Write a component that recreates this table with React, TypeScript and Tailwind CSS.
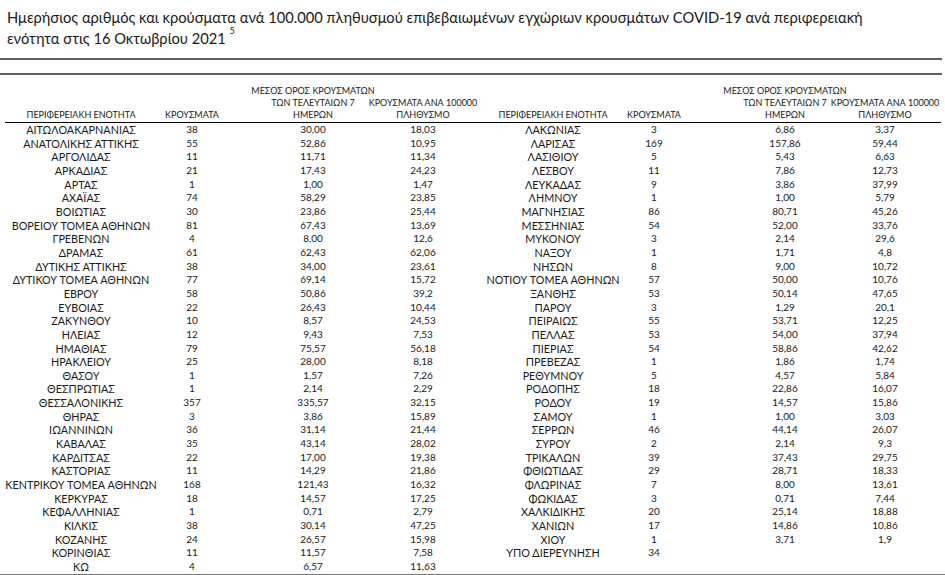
import React from "react";

type Row = [string, string, string, string];

const left: Row[] = [
  ["ΑΙΤΩΛΟΑΚΑΡΝΑΝΙΑΣ", "38", "30,00", "18,03"],
  ["ΑΝΑΤΟΛΙΚΗΣ ΑΤΤΙΚΗΣ", "55", "52,86", "10,95"],
  ["ΑΡΓΟΛΙΔΑΣ", "11", "11,71", "11,34"],
  ["ΑΡΚΑΔΙΑΣ", "21", "17,43", "24,23"],
  ["ΑΡΤΑΣ", "1", "1,00", "1,47"],
  ["ΑΧΑΪΑΣ", "74", "58,29", "23,85"],
  ["ΒΟΙΩΤΙΑΣ", "30", "23,86", "25,44"],
  ["ΒΟΡΕΙΟΥ ΤΟΜΕΑ ΑΘΗΝΩΝ", "81", "67,43", "13,69"],
  ["ΓΡΕΒΕΝΩΝ", "4", "8,00", "12,6"],
  ["ΔΡΑΜΑΣ", "61", "62,43", "62,06"],
  ["ΔΥΤΙΚΗΣ ΑΤΤΙΚΗΣ", "38", "34,00", "23,61"],
  ["ΔΥΤΙΚΟΥ ΤΟΜΕΑ ΑΘΗΝΩΝ", "77", "69,14", "15,72"],
  ["ΕΒΡΟΥ", "58", "50,86", "39,2"],
  ["ΕΥΒΟΙΑΣ", "22", "26,43", "10,44"],
  ["ΖΑΚΥΝΘΟΥ", "10", "8,57", "24,53"],
  ["ΗΛΕΙΑΣ", "12", "9,43", "7,53"],
  ["ΗΜΑΘΙΑΣ", "79", "75,57", "56,18"],
  ["ΗΡΑΚΛΕΙΟΥ", "25", "28,00", "8,18"],
  ["ΘΑΣΟΥ", "1", "1,57", "7,26"],
  ["ΘΕΣΠΡΩΤΙΑΣ", "1", "2,14", "2,29"],
  ["ΘΕΣΣΑΛΟΝΙΚΗΣ", "357", "335,57", "32,15"],
  ["ΘΗΡΑΣ", "3", "3,86", "15,89"],
  ["ΙΩΑΝΝΙΝΩΝ", "36", "31,14", "21,44"],
  ["ΚΑΒΑΛΑΣ", "35", "43,14", "28,02"],
  ["ΚΑΡΔΙΤΣΑΣ", "22", "17,00", "19,38"],
  ["ΚΑΣΤΟΡΙΑΣ", "11", "14,29", "21,86"],
  ["ΚΕΝΤΡΙΚΟΥ ΤΟΜΕΑ ΑΘΗΝΩΝ", "168", "121,43", "16,32"],
  ["ΚΕΡΚΥΡΑΣ", "18", "14,57", "17,25"],
  ["ΚΕΦΑΛΛΗΝΙΑΣ", "1", "0,71", "2,79"],
  ["ΚΙΛΚΙΣ", "38", "30,14", "47,25"],
  ["ΚΟΖΑΝΗΣ", "24", "26,57", "15,98"],
  ["ΚΟΡΙΝΘΙΑΣ", "11", "11,57", "7,58"],
  ["ΚΩ", "4", "6,57", "11,63"],
];

const right: Row[] = [
  ["ΛΑΚΩΝΙΑΣ", "3", "6,86", "3,37"],
  ["ΛΑΡΙΣΑΣ", "169", "157,86", "59,44"],
  ["ΛΑΣΙΘΙΟΥ", "5", "5,43", "6,63"],
  ["ΛΕΣΒΟΥ", "11", "7,86", "12,73"],
  ["ΛΕΥΚΑΔΑΣ", "9", "3,86", "37,99"],
  ["ΛΗΜΝΟΥ", "1", "1,00", "5,79"],
  ["ΜΑΓΝΗΣΙΑΣ", "86", "80,71", "45,26"],
  ["ΜΕΣΣΗΝΙΑΣ", "54", "52,00", "33,76"],
  ["ΜΥΚΟΝΟΥ", "3", "2,14", "29,6"],
  ["ΝΑΞΟΥ", "1", "1,71", "4,8"],
  ["ΝΗΣΩΝ", "8", "9,00", "10,72"],
  ["ΝΟΤΙΟΥ ΤΟΜΕΑ ΑΘΗΝΩΝ", "57", "50,00", "10,76"],
  ["ΞΑΝΘΗΣ", "53", "50,14", "47,65"],
  ["ΠΑΡΟΥ", "3", "1,29", "20,1"],
  ["ΠΕΙΡΑΙΩΣ", "55", "53,71", "12,25"],
  ["ΠΕΛΛΑΣ", "53", "54,00", "37,94"],
  ["ΠΙΕΡΙΑΣ", "54", "58,86", "42,62"],
  ["ΠΡΕΒΕΖΑΣ", "1", "1,86", "1,74"],
  ["ΡΕΘΥΜΝΟΥ", "5", "4,57", "5,84"],
  ["ΡΟΔΟΠΗΣ", "18", "22,86", "16,07"],
  ["ΡΟΔΟΥ", "19", "14,57", "15,86"],
  ["ΣΑΜΟΥ", "1", "1,00", "3,03"],
  ["ΣΕΡΡΩΝ", "46", "44,14", "26,07"],
  ["ΣΥΡΟΥ", "2", "2,14", "9,3"],
  ["ΤΡΙΚΑΛΩΝ", "39", "37,43", "29,75"],
  ["ΦΘΙΩΤΙΔΑΣ", "29", "28,71", "18,33"],
  ["ΦΛΩΡΙΝΑΣ", "7", "8,00", "13,61"],
  ["ΦΩΚΙΔΑΣ", "3", "0,71", "7,44"],
  ["ΧΑΛΚΙΔΙΚΗΣ", "20", "25,14", "18,88"],
  ["ΧΑΝΙΩΝ", "17", "14,86", "10,86"],
  ["ΧΙΟΥ", "1", "3,71", "1,9"],
  ["ΥΠΟ ΔΙΕΡΕΥΝΗΣΗ", "34", "", ""],
];

const grid =
  "grid grid-cols-[152px_70px_172px_48px_92px_28px_174px_88px_112px]";

function Cell({ children, name }: { children?: React.ReactNode; name?: boolean }) {
  return (
    <div
      className={`flex justify-center whitespace-nowrap ${
        name ? "text-[10.8px]" : "text-[10px]"
      }`}
    >
      {children}
    </div>
  );
}

function HeadCell({ lines }: { lines: string[] }) {
  return (
    <div className="flex flex-col items-center justify-end whitespace-nowrap">
      {lines.map((l) => (
        <div key={l} className="flex justify-center w-0">
          <span>{l}</span>
        </div>
      ))}
    </div>
  );
}

function Header() {
  const cols: string[][] = [
    ["ΠΕΡΙΦΕΡΕΙΑΚΗ ΕΝΟΤΗΤΑ"],
    ["ΚΡΟΥΣΜΑΤΑ"],
    ["ΜΕΣΟΣ ΟΡΟΣ ΚΡΟΥΣΜΑΤΩΝ", "ΤΩΝ ΤΕΛΕΥΤΑΙΩΝ 7", "ΗΜΕΡΩΝ"],
    ["ΚΡΟΥΣΜΑΤΑ ΑΝΑ 100000", "ΠΛΗΘΥΣΜΟ"],
  ];
  return (
    <div
      className={`${grid} ml-[5px] w-[936px] border-b border-black text-[9px] leading-[12px] text-[#1a1a1a] pb-[1px]`}
    >
      {cols.map((c, i) => (
        <HeadCell key={"l" + i} lines={c} />
      ))}
      <div />
      {cols.map((c, i) => (
        <HeadCell key={"r" + i} lines={c} />
      ))}
    </div>
  );
}

export default function App() {
  return (
    <div className="w-[945px] h-[575px] bg-white overflow-hidden font-['Lato','Noto_Sans',sans-serif] text-[#1a1a1a]">
      <div className="pl-[7px] pt-[7px] text-[14.7px] leading-[21px]">
        <div>
          Ημερήσιος αριθμός και κρούσματα ανά 100.000 πληθυσμού
          επιβεβαιωμένων εγχώριων κρουσμάτων COVID-19 ανά περιφερειακή
        </div>
        <div>
          ενότητα στις 16 Οκτωβρίου 2021{" "}
          <sup className="text-[9px] align-[6px]">5</sup>
        </div>
      </div>
      <div className="mt-[9px] h-[2px] w-[942px] bg-[#606060]" />
      <div className="mt-[13px] h-[2px] w-[942px] bg-[#606060]" />
      <div className="h-[10px]" />
      <Header />
      <div className="ml-[5px] w-[936px]">
        {left.map((l, i) => {
          const r = right[i];
          return (
            <div
              key={l[0]}
              className={`${grid} h-[13.66px] leading-[13.66px]`}
            >
              {l.map((v, j) => (
                <Cell key={j} name={j === 0}>
                  {v}
                </Cell>
              ))}
              <div />
              {r
                ? r.map((v, j) => (
                    <Cell key={j} name={j === 0}>
                      {v}
                    </Cell>
                  ))
                : [0, 1, 2, 3].map((k) => <Cell key={k} />)}
            </div>
          );
        })}
      </div>
      <div className="h-[3px] w-full bg-[#777777]" />
    </div>
  );
}
